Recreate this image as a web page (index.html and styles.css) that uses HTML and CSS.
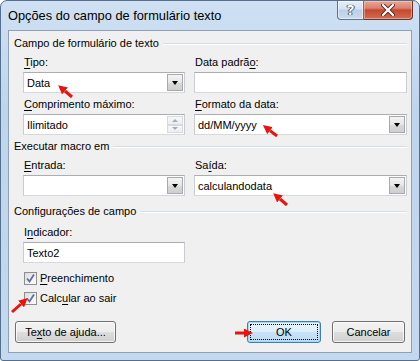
FILE: index.html
```html
<!DOCTYPE html>
<html lang="pt">
<head>
<meta charset="utf-8">
<title>Opções do campo de formulário texto</title>
<link rel="stylesheet" href="styles.css">
</head>
<body>
<div class="window">
  <div class="titlebar">
    <span class="title">Opções do campo de formulário texto</span>
    <div class="caption">
      <div class="cap-btn help"><span>?</span></div>
      <div class="cap-btn close">
        <svg width="14" height="12" viewBox="0 0 14 12"><path d="M2 1 L12 11 M12 1 L2 11" stroke="#5a2a22" stroke-width="4" stroke-linecap="round"/><path d="M2 1 L12 11 M12 1 L2 11" stroke="#fff" stroke-width="2.2" stroke-linecap="round"/></svg>
      </div>
    </div>
  </div>
  <div class="client">
    <div class="ghead first"><span>Campo de formulário de texto</span></div>
    <div class="fields">
      <div class="field">
        <div class="label"><u>T</u>ipo:</div>
        <div class="ctrl combo"><span class="val">Data</span><span class="drop"></span></div>
      </div>
      <div class="field">
        <div class="label">Data padrã<u>o</u>:</div>
        <div class="ctrl"></div>
      </div>
      <div class="field">
        <div class="label"><u>C</u>omprimento máximo:</div>
        <div class="ctrl spin"><span class="val">Ilimitado</span><span class="spinner"><span class="sp up"></span><span class="sp down"></span></span></div>
      </div>
      <div class="field">
        <div class="label"><u>F</u>ormato da data:</div>
        <div class="ctrl combo"><span class="val">dd/MM/yyyy</span><span class="drop"></span></div>
      </div>
    </div>

    <div class="ghead second"><span>Executar macro em</span></div>
    <div class="fields">
      <div class="field">
        <div class="label"><u>E</u>ntrada:</div>
        <div class="ctrl combo"><span class="val"></span><span class="drop"></span></div>
      </div>
      <div class="field">
        <div class="label">Sa<u>í</u>da:</div>
        <div class="ctrl combo"><span class="val">calculandodata</span><span class="drop"></span></div>
      </div>
    </div>

    <div class="ghead third"><span>Configurações de campo</span></div>
    <div class="fields single">
      <div class="field">
        <div class="label">I<u>n</u>dicador:</div>
        <div class="ctrl"><span class="val">Texto2</span></div>
      </div>
    </div>

    <div class="checks">
      <div class="check"><span class="box"><svg width="11" height="11" viewBox="0 0 11 11"><path d="M2 5.5 L4.5 8.5 L9 1.5" fill="none" stroke="#5d6f9e" stroke-width="1.8"/></svg></span><span><u>P</u>reenchimento</span></div>
      <div class="check"><span class="box"><svg width="11" height="11" viewBox="0 0 11 11"><path d="M2 5.5 L4.5 8.5 L9 1.5" fill="none" stroke="#5d6f9e" stroke-width="1.8"/></svg></span><span>Calc<u>u</u>lar ao sair</span></div>
    </div>

    <div class="buttons">
      <div class="btn help-btn">Te<u>x</u>to de ajuda...</div>
      <div class="btn-group">
        <div class="btn ok"><span class="focus">OK</span></div>
        <div class="btn cancel">Cancelar</div>
      </div>
    </div>
  </div>

  <svg class="arrows" width="420" height="361" viewBox="0 0 420 361">
    <defs>
      <marker id="head" viewBox="0 0 10 10" refX="0" refY="5" markerWidth="3" markerHeight="3" orient="auto">
        <path d="M0,0 L10,5 L0,10 z" fill="#e8140e"/>
      </marker>
    </defs>
    <g stroke="#e8140e" stroke-width="3" marker-end="url(#head)">
      <line x1="72" y1="97" x2="65" y2="91"/>
      <line x1="277" y1="136" x2="270" y2="130.6"/>
      <line x1="287" y1="205" x2="280" y2="199"/>
      <line x1="12" y1="312" x2="21" y2="304"/>
      <line x1="235" y1="333" x2="244" y2="333"/>
    </g>
  </svg>
</div>
</body>
</html>
```

FILE: styles.css
```css
* { box-sizing: border-box; }
html, body { margin: 0; padding: 0; }
body {
  width: 420px;
  height: 361px;
  overflow: hidden;
  font-family: "Liberation Sans", Arial, sans-serif;
  font-size: 11px;
  color: #000;
  background: #fff;
}
u { text-decoration: underline; text-underline-offset: 2px; text-decoration-thickness: 1px; }

.window {
  position: relative;
  width: 420px;
  height: 361px;
  padding: 0 7px 7px 7px;
  border: 1px solid #55708f;
  border-radius: 7px 7px 3px 3px;
  background: linear-gradient(#cfe0f3, #bfd5ec 30%, #c4d8ee 100%);
  display: flex;
  flex-direction: column;
}

.titlebar {
  height: 29px;
  display: flex;
  justify-content: space-between;
  align-items: flex-start;
}
.title {
  font-size: 12.8px;
  line-height: 17px;
  margin-top: 6px;
  margin-left: 0;
}
.caption {
  display: flex;
  margin-right: -1px;
}
.cap-btn {
  height: 19px;
  display: flex;
  align-items: center;
  justify-content: center;
  border: 1px solid #5c7390;
  border-top: none;
}
.help {
  width: 27px;
  border-radius: 0 0 0 4px;
  background: linear-gradient(#e6eef8, #d3e1f1 45%, #bccfe6 50%, #cadbee 100%);
  box-shadow: inset 0 0 0 1px rgba(255,255,255,.5);
}
.help span {
  font-family: "Noto Sans", sans-serif;
  font-size: 14px;
  font-weight: bold;
  color: #fff;
  text-shadow: 0 0 1px #3d536e, 0 0 1px #3d536e, 1px 0 0 #3d536e, -1px 0 0 #3d536e;
  line-height: 1;
}
.close {
  width: 49px;
  border-left: none;
  border-color: #6c3228;
  border-radius: 0 0 4px 0;
  background: linear-gradient(#eaa797, #d9806b 40%, #c6482f 50%, #cf6d55 100%);
  box-shadow: inset 0 0 0 1px rgba(255,220,210,.45);
}

.client {
  flex: 1;
  background: #f0f0f0;
  border: 1px solid #8da2ba;
  padding: 0 4px 0 5px;
}

.ghead {
  display: flex;
  align-items: center;
  height: 15px;
  line-height: 15px;
  white-space: nowrap;
}
.ghead::after {
  content: "";
  flex: 1;
  border-top: 1px solid #d5dfe5;
  border-bottom: 1px solid #fff;
  margin-left: 4px;
}
.ghead.first { margin-top: 5px; }
.ghead.second { margin-top: 4px; }
.ghead.third { margin-top: 8px; }

.fields {
  display: grid;
  grid-template-columns: 162px 213px;
  column-gap: 9px;
  row-gap: 4px;
  margin: 4px 0 0 9px;
}
.fields.single { margin-top: 6px; }

.label {
  height: 15px;
  line-height: 15px;
  margin-left: 1px;
  white-space: nowrap;
}
.ctrl {
  position: relative;
  height: 21px;
  margin-top: 2px;
  background: #fff;
  border: 1px solid #abadb3;
  border-color: #abadb3 #c9ccd3 #d5d8de #c9ccd3;
  display: flex;
  align-items: center;
}
.val {
  flex: 1;
  padding-left: 3px;
  white-space: nowrap;
}
.drop {
  width: 16px;
  align-self: stretch;
  margin: 1px;
  border: 1px solid #a7a9ae;
  background: linear-gradient(#f4f4f4, #e6e6e6 50%, #d9d9d9 51%, #cfcfcf);
  display: flex;
  align-items: center;
  justify-content: center;
}
.drop::before {
  content: "";
  width: 0;
  height: 0;
  border-left: 3.5px solid transparent;
  border-right: 3.5px solid transparent;
  border-top: 4px solid #000;
}
.spinner {
  width: 16px;
  align-self: stretch;
  margin: 1px;
  display: flex;
  flex-direction: column;
}
.sp {
  flex: 1;
  border: 1px solid #d6d9de;
  background: linear-gradient(#f8f8f8, #eceef0);
  display: flex;
  align-items: center;
  justify-content: center;
}
.sp.up::before, .sp.down::before {
  content: "";
  width: 0;
  height: 0;
  border-left: 3px solid transparent;
  border-right: 3px solid transparent;
}
.sp.up::before { border-bottom: 3px solid #a3acbd; }
.sp.down::before { border-top: 3px solid #a3acbd; }

.checks {
  margin: 5px 0 0 10px;
}
.check {
  height: 20px;
  display: flex;
  align-items: center;
  gap: 3px;
}
.box {
  width: 13px;
  height: 13px;
  border: 1px solid #8e8f8f;
  background: linear-gradient(135deg, #d9dadc, #f6f6f6 70%, #fff);
  display: flex;
  align-items: center;
  justify-content: center;
}

.buttons {
  margin: 13px 2px 0 1px;
  display: flex;
  justify-content: space-between;
}
.btn-group {
  display: flex;
  gap: 11px;
}
.btn {
  height: 22px;
  border: 1px solid #707070;
  border-radius: 3px;
  background: linear-gradient(#f3f3f3, #ececec 48%, #dddddd 50%, #d0d0d0);
  box-shadow: inset 0 0 0 1px rgba(255,255,255,.75);
  display: flex;
  align-items: center;
  justify-content: center;
  white-space: nowrap;
}
.help-btn { width: 101px; }
.ok {
  width: 74px;
  border-color: #3c7fb1;
  box-shadow: inset 0 0 0 1px #9fdcf7;
  background: linear-gradient(#eaf6fd, #dceef9 48%, #c6e3f6 50%, #bcdcf3);
  padding: 2px;
}
.focus {
  width: 100%;
  height: 100%;
  border: 1px dotted #000;
  display: flex;
  align-items: center;
  justify-content: center;
}
.cancel { width: 73px; }

.arrows {
  position: absolute;
  left: -1px;
  top: -1px;
  pointer-events: none;
}
```
